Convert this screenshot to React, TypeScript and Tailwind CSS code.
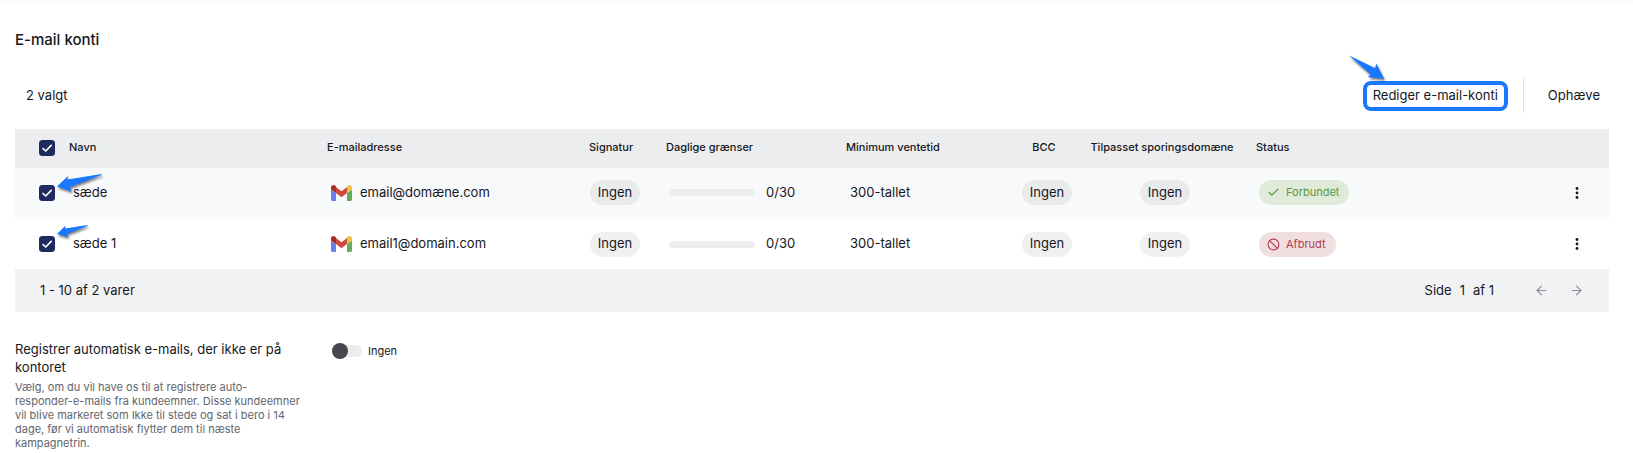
import React, { useState } from "react";
import { ArrowLeft, ArrowRight, Ban, Check } from "lucide-react";

interface Account {
  id: number;
  name: string;
  email: string;
  connected: boolean;
}

const accounts: Account[] = [
  { id: 1, name: "sæde", email: "email@domæne.com", connected: true },
  { id: 2, name: "sæde 1", email: "email1@domain.com", connected: false },
];

function Checkbox({ label, checked, onChange }: { label: string; checked: boolean; onChange: () => void }) {
  return (
    <span className="grid size-4 place-items-center">
      <input
        type="checkbox"
        aria-label={label}
        checked={checked}
        onChange={onChange}
        className="peer col-start-1 row-start-1 size-4 appearance-none rounded-[3px] border border-[#1f2b5e] bg-white checked:bg-[#1f2b5e]"
      />
      <svg
        viewBox="0 0 16 16"
        className="pointer-events-none invisible col-start-1 row-start-1 size-4 peer-checked:visible"
        fill="none"
        stroke="#fff"
        strokeWidth="1.7"
        strokeLinecap="round"
        strokeLinejoin="round"
      >
        <path d="M4 8.5 6.7 11 12.2 5.4" />
      </svg>
    </span>
  );
}

function GmailIcon() {
  return (
    <svg viewBox="0 0 21 16" className="h-4 w-[21px] shrink-0" aria-hidden="true">
      <path d="M0 4.5 5 8v8H1.4A1.4 1.4 0 0 1 0 14.6z" fill="#6a80f0" />
      <path d="M16 8l5-3.5v10.1a1.4 1.4 0 0 1-1.4 1.4H16z" fill="#66ab5b" />
      <path d="M5 2l5.500 4.200L16 2v6l-5.500 4.200L5 8z" fill="#cf4a3c" />
      <path d="M0 2.600C0 .4 2.400-.7 4.200.7L5 1.500V8L0 4.500z" fill="#a92c26" />
      <path d="M21 2.600C21 .4 18.600-.7 16.800.7L16 1.500V8l5-3.500z" fill="#eac540" />
    </svg>
  );
}

function Chip() {
  return (
    <span className="inline-flex h-[25px] w-[50px] items-center justify-center rounded-full bg-black/6">
      Ingen
    </span>
  );
}

function StatusBadge({ connected }: { connected: boolean }) {
  return connected ? (
    <span className="inline-flex h-[25px] items-center gap-1.5 rounded-full bg-[#dfead9] pr-2.5 pl-2 text-[11px] text-[#559a3c]">
      <Check size={13} />
      Forbundet
    </span>
  ) : (
    <span className="inline-flex h-[25px] items-center gap-1.5 rounded-full bg-[#f1dfe0] pr-2.5 pl-2 text-[11px] text-[#b03c48]">
      <Ban size={13} />
      Afbrudt
    </span>
  );
}

// Hint arrows that lie over the controls they point at
function HintArrow({ points, className, viewBox }: { points: string; className: string; viewBox: string }) {
  return (
    <svg
      viewBox={viewBox}
      aria-hidden="true"
      className={`pointer-events-none absolute overflow-visible drop-shadow-[1px_2px_1px_rgba(0,0,0,0.5)] ${className}`}
    >
      <polygon points={points} fill="#1a78ff" />
    </svg>
  );
}

export default function App() {
  const [selected, setSelected] = useState<number[]>([1, 2]);
  const [autoDetect, setAutoDetect] = useState(false);

  const allSelected = selected.length === accounts.length;

  const toggleAll = () => setSelected(allSelected ? [] : accounts.map((a) => a.id));

  const toggle = (id: number) =>
    setSelected((prev) => (prev.includes(id) ? prev.filter((x) => x !== id) : [...prev, id]));

  return (
    <main className="border-t-3 border-[#f8f9fb] bg-white pr-6 pb-3 pl-[15px] font-['Inter',sans-serif] text-[13px] text-[#16171c]">
      <h1 className="pt-[27px] text-[15px] leading-5 font-medium">E-mail konti</h1>

      {/* Bulk actions */}
      <div className="mt-7 flex h-[35px] items-center pr-[9px] pl-[11px]">
        <span className="grow">{selected.length} valgt</span>
        <div className="relative">
          <button type="button" className="h-[30px] rounded-lg border-4 border-[#1a78ff] px-[6px]">
            Rediger e-mail-konti
          </button>
          <HintArrow
            viewBox="0 0 36 25"
            className="-top-[26px] -left-[14px] h-[25px] w-9"
            points="0,0.500 26,13 27.300,8.500 35.300,24 19,22 21.500,19.500"
          />
        </div>
        <span className="mr-6 ml-[15px] h-full w-px bg-[#dfe0e3]" />
        <button type="button">Ophæve</button>
      </div>

      <div className="mt-4">
        <table className="w-full table-fixed text-left whitespace-nowrap">
          <colgroup>
            <col className="w-[54px]" />
            <col className="w-[258px]" />
            <col className="w-[262px]" />
            <col className="w-[77px]" />
            <col className="w-[180px]" />
            <col className="w-[168px]" />
            <col className="w-[60px]" />
            <col className="w-[176px]" />
            <col />
            <col className="w-16" />
          </colgroup>
          <thead className="bg-[#ecedef] text-[11px]">
            <tr className="h-[39px] *:pb-0.5">
              <th className="pl-6">
                <Checkbox label="Vælg alle" checked={allSelected} onChange={toggleAll} />
              </th>
              <th className="font-medium">Navn</th>
              <th className="font-medium">E-mailadresse</th>
              <th className="font-medium">Signatur</th>
              <th className="font-medium">Daglige grænser</th>
              <th className="font-medium">Minimum ventetid</th>
              <th className="text-center font-medium">BCC</th>
              <th className="text-center font-medium">Tilpasset sporingsdomæne</th>
              <th className="pl-1.5 font-medium">Status</th>
              <th aria-label="Handlinger" />
            </tr>
          </thead>
          <tbody>
            {accounts.map((account) => (
              <tr key={account.id} className="h-[51px] odd:bg-[#f8f9fb] odd:*:pb-0.5 even:h-[50px]">
                <td className="pl-6">
                  <div className="relative w-4">
                    <Checkbox
                      label={`Vælg ${account.name}`}
                      checked={selected.includes(account.id)}
                      onChange={() => toggle(account.id)}
                    />
                    {account.id === 1 ? (
                      <HintArrow
                        viewBox="0 0 45 18"
                        className="-top-[11px] left-[18px] h-[18px] w-[45px]"
                        points="44.500,0 44.500,1 13,13 14.500,17.500 0,12.500 11,2 10.500,5.500"
                      />
                    ) : (
                      <HintArrow
                        viewBox="0 0 31 13"
                        className="-top-[11px] left-[18px] h-[13px] w-[31px]"
                        points="30.500,0 30.500,1 10,9 11.300,12.300 0,9 8.500,0.500 8,3.500"
                      />
                    )}
                  </div>
                </td>
                <td className="pl-1">{account.name}</td>
                <td className="pl-1">
                  <div className="flex items-center gap-2">
                    <GmailIcon />
                    {account.email}
                  </div>
                </td>
                <td className="pl-px">
                  <Chip />
                </td>
                <td className="pl-[3px]">
                  <div className="flex items-center gap-[11px]">
                    <span className="h-[7px] w-[86px] rounded-full bg-[#ecedef]" />
                    0/30
                  </div>
                </td>
                <td className="pl-1">300-tallet</td>
                <td className="pl-1.5 text-center">
                  <Chip />
                </td>
                <td className="pl-1.5 text-center">
                  <Chip />
                </td>
                <td className="pl-[9px]">
                  <StatusBadge connected={account.connected} />
                </td>
                <td>
                  <button type="button" aria-label="Flere handlinger" className="mx-auto block">
                    <svg viewBox="0 0 16 16" className="size-4" fill="#16171c">
                      <circle cx="8" cy="3.500" r="1.400" />
                      <circle cx="8" cy="8" r="1.400" />
                      <circle cx="8" cy="12.500" r="1.400" />
                    </svg>
                  </button>
                </td>
              </tr>
            ))}
          </tbody>
        </table>

        {/* Pagination */}
        <div className="flex h-[43px] items-center bg-[#f1f2f4] pr-[25px] pl-[25px]">
          <span className="grow">1 - 10 af 2 varer</span>
          <span className="mr-10 flex gap-2">
            <span>Side</span>
            <span>1</span>
            <span>af 1</span>
          </span>
          <div className="flex gap-5 text-[#8b8e96]">
            <button type="button" disabled aria-label="Forrige side">
              <ArrowLeft size={15} strokeWidth={1.75} />
            </button>
            <button type="button" disabled aria-label="Næste side">
              <ArrowRight size={15} strokeWidth={1.75} />
            </button>
          </div>
        </div>
      </div>

      <section className="mt-7 flex items-start">
        <div className="mr-[31px] w-[286px]">
          <label htmlFor="auto-detect" className="block leading-[18px]">
            Registrer automatisk e-mails, der ikke er på kontoret
          </label>
          <p className="mt-1 text-[11px] leading-[14px] text-[#62656d]">
            Vælg, om du vil have os til at registrere auto-responder-e-mails fra kundeemner. Disse
            kundeemner vil blive markeret som Ikke til stede og sat i bero i 14 dage, før vi
            automatisk flytter dem til næste kampagnetrin.
          </p>
        </div>
        <div className="mt-0.5 flex h-[18px] items-center gap-1.5">
          <input
            id="auto-detect"
            type="checkbox"
            role="switch"
            checked={autoDetect}
            onChange={() => setAutoDetect(!autoDetect)}
            className="flex h-3 w-[30px] appearance-none items-center rounded-full bg-[#ececee] before:size-4 before:shrink-0 before:rounded-full before:bg-[#474751] checked:justify-end"
          />
          <span className="text-[11px]">Ingen</span>
        </div>
      </section>
    </main>
  );
}
